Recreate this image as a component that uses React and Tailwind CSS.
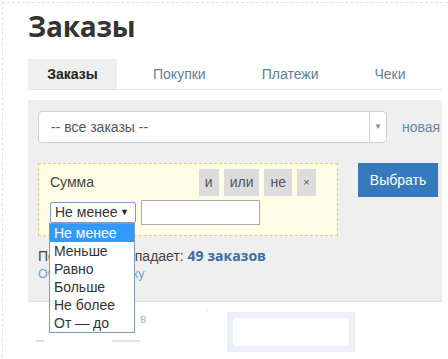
const tabs = ['Покупки', 'Платежи', 'Чеки']
const ops = ['и', 'или', 'не', '×']
const options = ['Не менее', 'Меньше', 'Равно', 'Больше', 'Не более', 'От — до']

const App = () => {
  return (
    <div className="relative w-[448px] h-[359px] overflow-hidden bg-white font-['Liberation_Sans',Arial,sans-serif]">
      <div className="ml-[2px] mt-[2px] h-[400px] w-[446px] border-l border-t border-dashed border-[#e4e4e4] pl-[25px] pt-[6px]">
        <h1 className="h-[34px] text-[28px] leading-[34px] font-bold text-[#333] font-['Open_Sans',sans-serif] tracking-[-0.2px]">
          Заказы
        </h1>

        <div className="mt-[16px] flex w-[414px] border-b border-[#e3e3e3]">
          <div className="flex h-[30px] w-[89px] items-center justify-center bg-[#efefef] text-[14px] font-bold text-[#222]">
            Заказы
          </div>
          <div className="flex h-[30px] items-center pl-[36px] text-[14px] text-[#5f7f9f]">{tabs[0]}</div>
          <div className="flex h-[30px] items-center pl-[56px] text-[14px] text-[#5f7f9f]">{tabs[1]}</div>
          <div className="flex h-[30px] items-center pl-[56px] text-[14px] text-[#5f7f9f]">{tabs[2]}</div>
        </div>

        <div className="relative mt-[10px] h-[202px] w-[414px] border-b border-[#dcdcdc] bg-[#efefef] pl-[10px] pt-[11px]">
          <div className="flex items-center">
            <div className="flex h-[32px] w-[349px] items-center rounded-[4px] border border-[#cfcfcf] bg-white">
              <div className="flex-1 pl-[12px] text-[14px] text-[#555]">-- все заказы --</div>
              <div className="flex h-full w-[17px] items-center justify-center border-l border-[#d6d6d6] text-[8px] text-[#888]">▼</div>
            </div>
            <span className="ml-[15px] text-[14px] text-[#6a87a8]">новая</span>
          </div>

          <div className="mt-[20px] flex items-start">
            <div className="h-[73px] w-[300px] border border-dashed border-[#d6cc86] bg-[#fffde4] pl-[11px] pt-[5px]">
              <div className="flex h-[27px] items-center">
                <span className="flex-1 text-[14px] text-[#444]">Сумма</span>
                <div className="mr-[21px] flex gap-[5px]">
                  {ops.map((op) => (
                    <span
                      key={op}
                      className={`flex h-[27px] items-center justify-center bg-[#dcdcdc] px-[6px] text-[#555] ${op === '×' ? 'text-[11px] w-[19px]' : 'text-[14px]'}`}
                    >
                      {op}
                    </span>
                  ))}
                </div>
              </div>
              <div className="mt-[4px] flex items-center gap-[5px]">
                <div className="flex h-[21px] w-[86px] items-center justify-between rounded-[2px] border border-[#7f9ccc] bg-white pl-[4px] pr-[6px] text-[14px] text-[#333]">
                  Не менее
                  <span className="text-[9px] text-[#222]">▼</span>
                </div>
                <div className="h-[25px] w-[119px] border border-[#aaa] bg-white" />
              </div>
            </div>
            <button className="ml-[20px] flex h-[34px] w-[80px] items-center justify-center bg-[#357abd] text-[14px] text-white">
              Выбрать
            </button>
          </div>

          <div className="mt-[11px] text-[14px] leading-[18px] text-[#444]">
            Под фильтр попадает: <span className="font-bold text-[#3a6ea5] font-['Open_Sans',sans-serif]">49 заказов</span>
          </div>
          <div className="text-[12.5px] leading-[18px] text-[#7a9cc0]">Очистить выборку</div>

          {/* open select list */}
          <div className="absolute left-[21px] top-[123px] w-[86px] border border-[#7f9db9] bg-white">
            {options.map((opt, i) => (
              <div
                key={opt}
                className={`h-[18px] pl-[4px] text-[14px] leading-[18px] ${i === 0 ? 'bg-[#3399ff] text-white' : 'text-[#333]'}`}
              >
                {opt}
              </div>
            ))}
          </div>
        </div>

        <div className="relative h-[60px]">
          <span className="absolute left-[112px] top-[8px] text-[12px] text-[#bbb]">в</span>
          <span className="absolute left-[178px] top-[5px] text-[10px] text-[#ccc]">´</span>
          <div className="absolute left-[8px] top-[38px] h-[2px] w-[8px] bg-[#ddd]" />
          <div className="absolute left-[84px] top-[38px] h-[2px] w-[28px] bg-[#e2e2e2]" />
          <div className="absolute left-[199px] top-[10px] h-[40px] w-[128px] bg-[#eeeefa] p-[6px]">
            <div className="h-[28px] w-[116px] rounded-[3px] bg-white" />
          </div>
        </div>
      </div>
    </div>
  )
}

export default App
